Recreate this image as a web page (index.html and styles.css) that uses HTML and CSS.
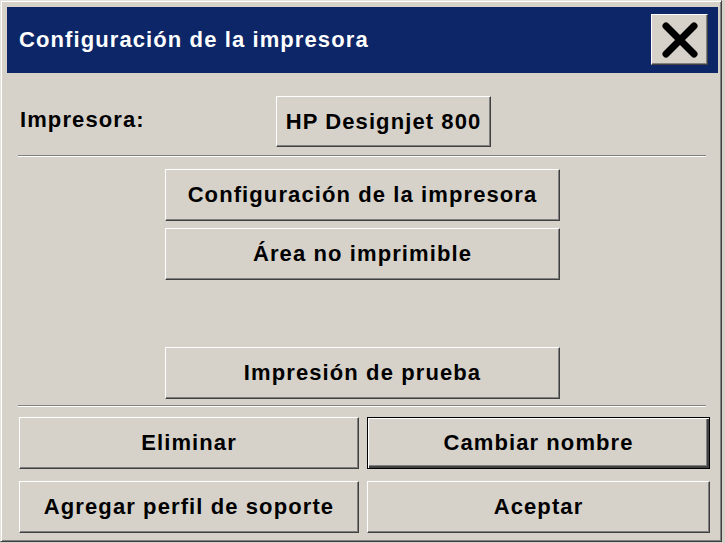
FILE: index.html
```html
<!DOCTYPE html>
<html lang="es">
<head>
    <meta charset="UTF-8">
    <meta name="viewport" content="width=device-width, initial-scale=1.0">
    <title>Configuración de la impresora</title>
    <link rel="stylesheet" href="styles.css">
</head>
<body>

    <!-- Ventana de configuración -->
    <div class="window">
        <div class="title-bar">
            <span class="title-text">Configuración de la impresora</span>
            <button class="close-btn" aria-label="Cerrar">
                <svg width="38" height="36" viewBox="0 0 38 36">
                    <path d="M5 4 L33 32 M33 4 L5 32" stroke="#000" stroke-width="7" stroke-linecap="round" fill="none"/>
                </svg>
            </button>
        </div>

        <div class="content">
            <div class="printer-row">
                <span class="label">Impresora:</span>
                <button class="btn btn-printer">HP Designjet 800</button>
            </div>

            <div class="separator"></div>

            <div class="actions">
                <button class="btn btn-wide">Configuración de la impresora</button>
                <button class="btn btn-wide">Área no imprimible</button>
                <button class="btn btn-wide btn-test">Impresión de prueba</button>
            </div>

            <div class="separator separator-bottom"></div>

            <div class="bottom-grid">
                <button class="btn">Eliminar</button>
                <button class="btn focused">Cambiar nombre</button>
                <button class="btn">Agregar perfil de soporte</button>
                <button class="btn">Aceptar</button>
            </div>
        </div>
    </div>

</body>
</html>
```

FILE: styles.css
```css
body, html {
    margin: 0;
    padding: 0;
    height: 100%;
    overflow: hidden;
    background-color: #d4d0c8;
}

.window {
    box-sizing: border-box;
    width: 722px;
    height: 542px;
    background-color: #d6d2ca;
    border: 1px solid;
    border-color: #e6e3dd #404040 #404040 #e6e3dd;
    box-shadow: inset 1px 1px #ffffff, inset -1px -1px #808080;
    padding: 6px 3px 0 6px;
    font-family: "Liberation Sans", Arial, sans-serif;
    font-size: 22px;
    font-weight: bold;
    letter-spacing: 1.1px;
}

.title-bar {
    height: 66px;
    background-color: #0c2668;
    display: flex;
    align-items: center;
    justify-content: space-between;
    padding: 0 10px 1px 12px;
    box-sizing: border-box;
}

.title-text {
    color: white;
}

.close-btn {
    width: 57px;
    height: 51px;
    padding: 0;
    display: flex;
    align-items: center;
    justify-content: center;
    background-color: #d6d2ca;
    border: 1px solid;
    border-color: #ffffff #404040 #404040 #ffffff;
    box-shadow: inset -1px -1px #808080;
}

.content {
    padding: 23px 7px 0 11px;
}

.btn {
    box-sizing: border-box;
    height: 52px;
    background-color: #d6d2ca;
    border: 1px solid;
    border-color: #ffffff #404040 #404040 #ffffff;
    box-shadow: inset -1px -1px #808080;
    font-family: inherit;
    font-size: inherit;
    font-weight: inherit;
    letter-spacing: inherit;
    color: black;
    padding: 0;
}

.btn.focused {
    border: 1px solid #000;
    box-shadow: inset 1px 1px #ffffff, inset -2px -2px #404040, inset -3px -3px #808080;
}

.printer-row {
    display: flex;
    align-items: center;
    height: 51px;
}

.label {
    color: black;
    width: 256px;
    padding-left: 2px;
    padding-bottom: 3px;
}

.btn-printer {
    width: 215px;
    height: 51px;
}

.separator {
    width: 688px;
    margin: 8px 0 12px;
    border-top: 1px solid #808080;
    border-bottom: 1px solid #ffffff;
}

.separator-bottom {
    margin: 6px 0 10px;
}

.actions {
    display: flex;
    flex-direction: column;
    align-items: flex-start;
    gap: 7px;
    padding-left: 147px;
}

.btn-wide {
    width: 395px;
}

.btn-test {
    margin-top: 60px;
}

.bottom-grid {
    display: grid;
    grid-template-columns: 340px 343px;
    column-gap: 8px;
    row-gap: 12px;
    margin-left: 1px;
}
```
